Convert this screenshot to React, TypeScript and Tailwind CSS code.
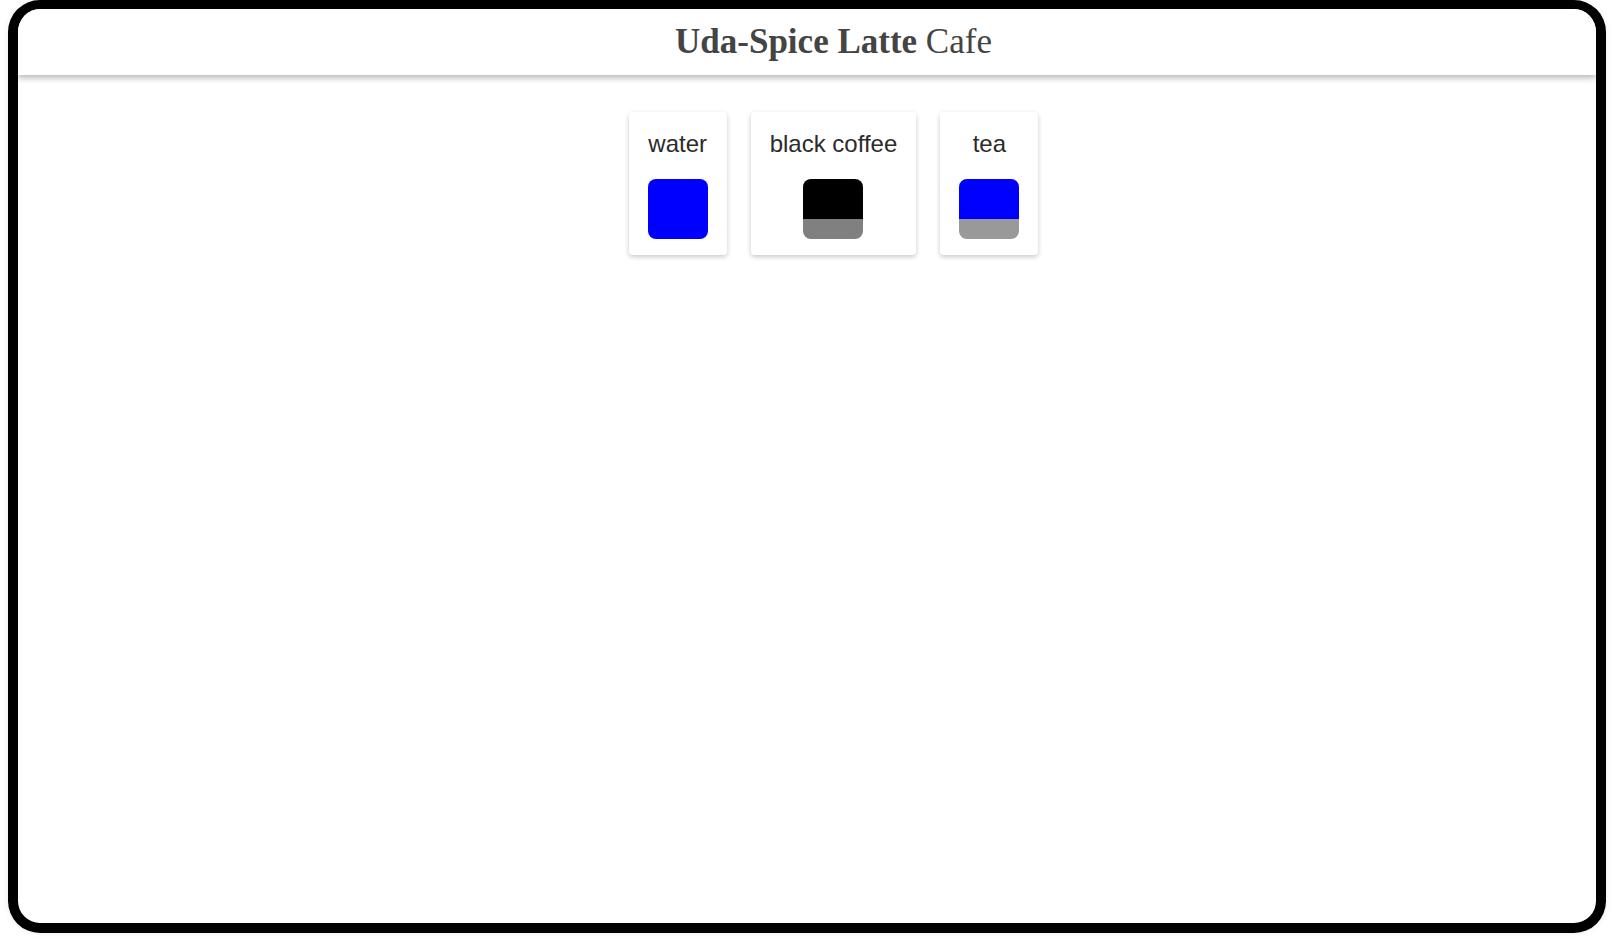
import React from 'react';

type Drink = { name: string; layers: { color: string; part: number }[] };

const drinks: Drink[] = [
  { name: 'water', layers: [{ color: '#0000ff', part: 1 }] },
  { name: 'black coffee', layers: [{ color: '#000000', part: 2 }, { color: '#808080', part: 1 }] },
  { name: 'tea', layers: [{ color: '#0000ff', part: 2 }, { color: '#999999', part: 1 }] },
];

const DrinkCard = ({ drink }: { drink: Drink }) => (
  <div className="bg-white rounded-[4px] shadow-[0_2px_5px_rgba(0,0,0,0.22)] pt-[18px] px-[19px] pb-[16px] flex flex-col items-center">
    <span className="text-[24px] leading-[28px] text-[#2b2b2b] font-['Liberation_Sans',Arial,sans-serif] whitespace-nowrap">
      {drink.name}
    </span>
    <div className="mt-[21px] w-[60px] h-[60px] rounded-[8px] overflow-hidden flex flex-col">
      {drink.layers.map((l, i) => (
        <div key={i} style={{ backgroundColor: l.color, flexGrow: l.part }} />
      ))}
    </div>
  </div>
);

const App: React.FC = () => {
  return (
    <div className="w-[1616px] h-[940px] bg-white pl-[8px] pr-[10px] pb-[7px]">
      <div className="h-full border-[10px] border-t-[9px] border-black rounded-[32px] overflow-hidden shadow-[0_0_6px_rgba(0,0,0,0.08)] flex flex-col">
        <header className="h-[66px] shrink-0 bg-white shadow-[0_3px_6px_rgba(0,0,0,0.28)] flex items-center justify-center pl-[53px] relative z-10">
          <h1 className="text-[35px] text-[#444] font-['Liberation_Serif','Times_New_Roman',serif] leading-none -mt-[1px]">
            <span className="font-bold">Uda-Spice Latte</span> Cafe
          </h1>
        </header>
        <main className="flex-1 flex justify-center items-start gap-[24px] pt-[37px] pl-[53px]">
          {drinks.map(d => (
            <DrinkCard key={d.name} drink={d} />
          ))}
        </main>
      </div>
    </div>
  );
};

export default App;
